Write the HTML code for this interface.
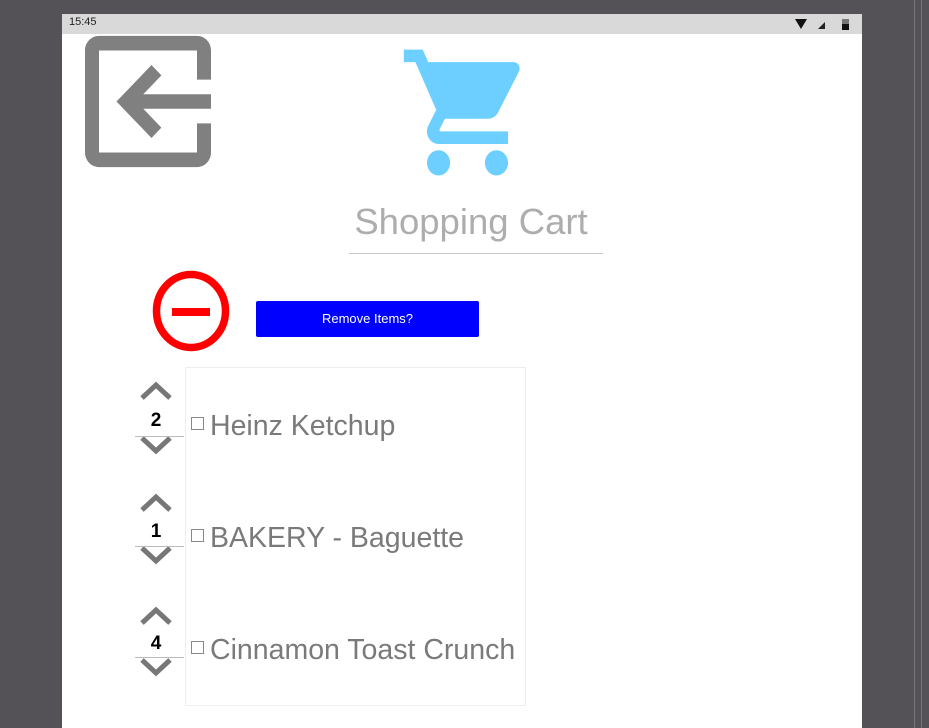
<!DOCTYPE html>
<html><head><meta charset="utf-8"><style>
body{margin:0;width:929px;height:728px;background:#545257;position:relative;overflow:hidden;font-family:"Liberation Sans",sans-serif}
.abs{position:absolute}
#phone{left:62px;top:14px;width:800px;height:714px;background:#fff}
#bar{left:62px;top:14px;width:800px;height:20px;background:#d9d9d9}
.item{position:absolute;left:210px;font-size:28.5px;color:#7a7a7a;white-space:nowrap}
.cb{position:absolute;left:191px;width:11px;height:11px;border:1px solid #888}
.num{position:absolute;left:136px;width:40px;text-align:center;font-weight:bold;font-size:19px;color:#000}
.ln{position:absolute;left:135px;width:49px;height:1px;background:#bbb}
</style></head><body>
<div class="abs" style="left:914px;top:0;width:1px;height:728px;background:#77757a"></div>
<div class="abs" style="left:921px;top:0;width:1px;height:728px;background:#77757a"></div>
<div id="phone" class="abs"></div>
<div id="bar" class="abs"></div>
<div class="abs" style="left:69px;top:16px;font-size:11px;color:#222">15:45</div>
<svg class="abs" style="left:790px;top:14px" width="70" height="20">
<path d="M5 5 L17 5 L11 15 Z" fill="#111"/>
<path d="M28 15 L35 8 L35 15 Z" fill="#222"/>
<rect x="52" y="5" width="7" height="11" fill="#777"/><rect x="52" y="10" width="7" height="6" fill="#111"/>
</svg>
<svg class="abs" style="left:64px;top:14px" width="168" height="175" viewBox="0 0 24 24" preserveAspectRatio="none">
<g transform="translate(24,0) scale(-1,1)" fill="#808080"><path d="M10.09 15.590L11.5 17l5-5-5-5-1.41 1.41L12.67 11H3v2h9.67l-2.58 2.59zM19 3H5c-1.11 0-2 .9-2 2v4h2V5h14v14H5v-4H3v4c0 1.1.89 2 2 2h14c1.1 0 2-.9 2-2V5c0-1.1-.9-2-2-2z"/></g>
</svg>
<svg class="abs" style="left:398px;top:37px" width="139" height="151" viewBox="0 0 24 24" preserveAspectRatio="none">
<path fill="#6ccfff" d="M7 18c-1.1 0-1.99.9-1.99 2S5.9 22 7 22s2-.9 2-2-.9-2-2-2zM1 2v2h2l3.6 7.59-1.35 2.450c-.16.28-.25.61-.25.96 0 1.1.9 2 2 2h12v-2H7.42c-.14 0-.25-.11-.25-.25l.03-.12.9-1.63h7.45c.75 0 1.41-.41 1.750-1.03l3.58-6.49A1.003 1.003 0 0020 4H5.21l-.94-2H1zm16 16c-1.1 0-1.990.9-1.99 2s.89 2 1.99 2 2-.9 2-2-.9-2-2-2z"/>
</svg>
<div class="abs" style="left:344px;top:201px;width:254px;text-align:center;font-size:36.5px;color:#adadad">Shopping Cart</div>
<div class="abs" style="left:349px;top:253px;width:254px;height:1px;background:#c8c8c8"></div>
<svg class="abs" style="left:150px;top:268px" width="84" height="88">
<ellipse cx="41" cy="43" rx="34.5" ry="36.5" fill="none" stroke="#f00" stroke-width="7.5"/>
<rect x="22" y="40" width="38" height="8" fill="#f00"/>
</svg>
<div class="abs" style="left:256px;top:301px;width:223px;height:36px;background:#00f;border-radius:2px;color:#fff;font-size:13px;text-align:center;line-height:36px">Remove Items?</div>
<div class="abs" style="left:185px;top:367px;width:339px;height:337px;border:1px solid #eee"></div>

<svg class="abs" style="left:135px;top:378px" width="45" height="300">
<g fill="none" stroke="#777" stroke-width="5">
<path d="M7 20 L21 7 L35 20"/><path d="M7 60 L21 73 L35 60"/>
<path d="M7 132 L21 119 L35 132"/><path d="M7 170 L21 183 L35 170"/>
<path d="M7 245 L21 232 L35 245"/><path d="M7 282 L21 295 L35 282"/>
</g></svg>
<div class="num" style="top:410px">2</div><div class="ln" style="top:436px"></div>
<div class="num" style="top:521px">1</div><div class="ln" style="top:546px"></div>
<div class="num" style="top:633px">4</div><div class="ln" style="top:657px"></div>
<div class="cb" style="top:417px"></div><div class="item" style="top:410px">Heinz Ketchup</div>
<div class="cb" style="top:529px"></div><div class="item" style="top:522px">BAKERY - Baguette</div>
<div class="cb" style="top:641px"></div><div class="item" style="top:634px">Cinnamon Toast Crunch</div>
</body></html>
